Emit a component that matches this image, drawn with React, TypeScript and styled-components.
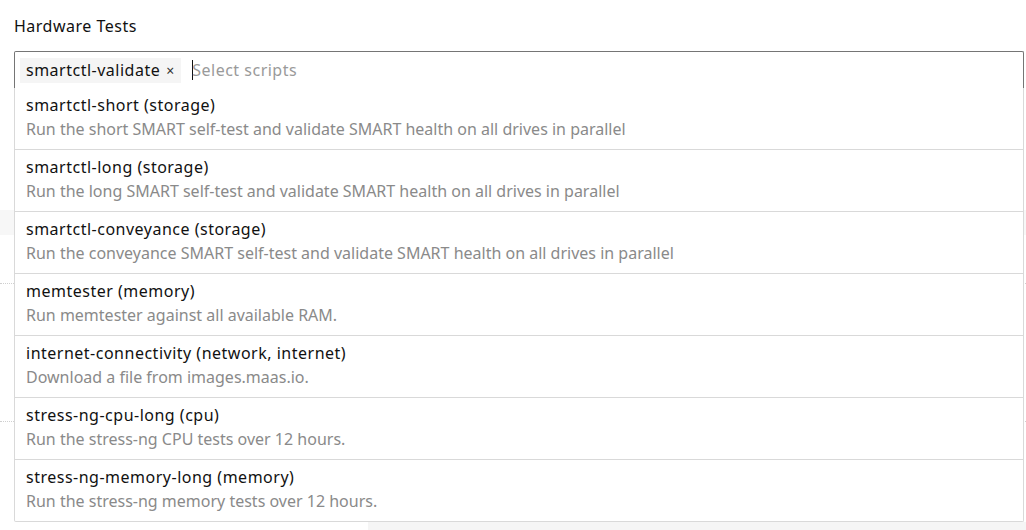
import * as React from "react";
import styled, { createGlobalStyle } from "styled-components";

const GlobalStyle = createGlobalStyle`
  html, body {
    margin: 0;
    padding: 0;
    background: #fff;
  }
  body {
    font-family: "Noto Sans", "Open Sans", sans-serif;
    font-size: 16px;
    color: #111;
    -webkit-font-smoothing: antialiased;
  }
`;

const scripts = [
  {
    name: "smartctl-short (storage)",
    desc: "Run the short SMART self-test and validate SMART health on all drives in parallel",
  },
  {
    name: "smartctl-long (storage)",
    desc: "Run the long SMART self-test and validate SMART health on all drives in parallel",
  },
  {
    name: "smartctl-conveyance (storage)",
    desc: "Run the conveyance SMART self-test and validate SMART health on all drives in parallel",
  },
  { name: "memtester (memory)", desc: "Run memtester against all available RAM." },
  {
    name: "internet-connectivity (network, internet)",
    desc: "Download a file from images.maas.io.",
  },
  { name: "stress-ng-cpu-long (cpu)", desc: "Run the stress-ng CPU tests over 12 hours." },
  {
    name: "stress-ng-memory-long (memory)",
    desc: "Run the stress-ng memory tests over 12 hours.",
  },
];

const Page = styled.div`
  position: relative;
  width: 1026px;
  height: 530px;
  overflow: hidden;
`;

const Field = styled.div`
  position: relative;
  z-index: 1;
  padding: 14px 2px 0 14px;
`;

const Label = styled.label`
  display: block;
  line-height: 24px;
  margin-bottom: 13px;
  letter-spacing: 0.5px;
`;

const Control = styled.div`
  position: relative;
`;

const Input = styled.div`
  display: flex;
  align-items: center;
  gap: 11px;
  height: 37px;
  padding: 0 5px;
  border: 1px solid #757575;
  border-bottom: none;
  border-radius: 2px 2px 0 0;
  box-sizing: border-box;
`;

const Chip = styled.span`
  display: inline-flex;
  align-items: center;
  gap: 6px;
  height: 25px;
  padding: 0 7px 0 6px;
  background: #f5f5f5;
  line-height: 25px;
  letter-spacing: 0.5px;
`;

const ChipClose = styled.span`
  font-size: 14px;
  color: #333;
  letter-spacing: 0;
`;

const Entry = styled.span`
  display: inline-flex;
  align-items: center;
`;

const Caret = styled.span`
  display: inline-block;
  width: 1px;
  height: 20px;
  background: #111;
  margin-right: -1px;
`;

const Placeholder = styled.span`
  color: #9a9a9a;
  letter-spacing: 0.5px;
`;

const Menu = styled.ul`
  position: absolute;
  top: 37px;
  left: 0;
  right: 0;
  margin: 0;
  padding: 0;
  list-style: none;
  background: #fff;
  border: 1px solid #d9d9d9;
  border-top: none;
  border-radius: 0 0 2px 2px;
  z-index: 2;
`;

const Option = styled.li<{ $first?: boolean }>`
  padding: 5px 11px 7px;
  border-top: ${({ $first }) => ($first ? "none" : "1px solid #d9d9d9")};
`;

const OptionName = styled.div`
  line-height: 24px;
  color: #111;
  letter-spacing: 0.5px;
`;

const OptionDesc = styled.div`
  line-height: 25px;
  color: #8a8a8a;
`;

// content of the form lying under the open menu
const Backdrop = styled.div`
  position: absolute;
  inset: 0;
  z-index: 0;
  pointer-events: none;
`;

const BackRows = styled.div`
  display: flex;
  flex-direction: column;
  padding-top: 210px;
`;

const ShadedRow = styled.div`
  height: 25px;
  background: #f7f7f7;
`;

const DottedRule = styled.div<{ $gap: number }>`
  margin-top: ${({ $gap }) => $gap}px;
  border-top: 1px dotted #d0d0d0;
`;

const FooterBand = styled.div`
  margin-top: 100px;
  margin-left: 368px;
  height: 20px;
  background: #f5f5f5;
`;

export default function App() {
  return (
    <Page>
      <GlobalStyle />
      <Backdrop>
        <BackRows>
          <ShadedRow />
          <DottedRule $gap={48} />
          <DottedRule $gap={137} />
          <FooterBand />
        </BackRows>
      </Backdrop>
      <Field>
        <Label>Hardware Tests</Label>
        <Control>
          <Input>
            <Chip>
              smartctl-validate <ChipClose>×</ChipClose>
            </Chip>
            <Entry>
              <Caret />
              <Placeholder>Select scripts</Placeholder>
            </Entry>
          </Input>
          <Menu>
            {scripts.map((s, i) => (
              <Option key={s.name} $first={i === 0}>
                <OptionName>{s.name}</OptionName>
                <OptionDesc>{s.desc}</OptionDesc>
              </Option>
            ))}
          </Menu>
        </Control>
      </Field>
    </Page>
  );
}
